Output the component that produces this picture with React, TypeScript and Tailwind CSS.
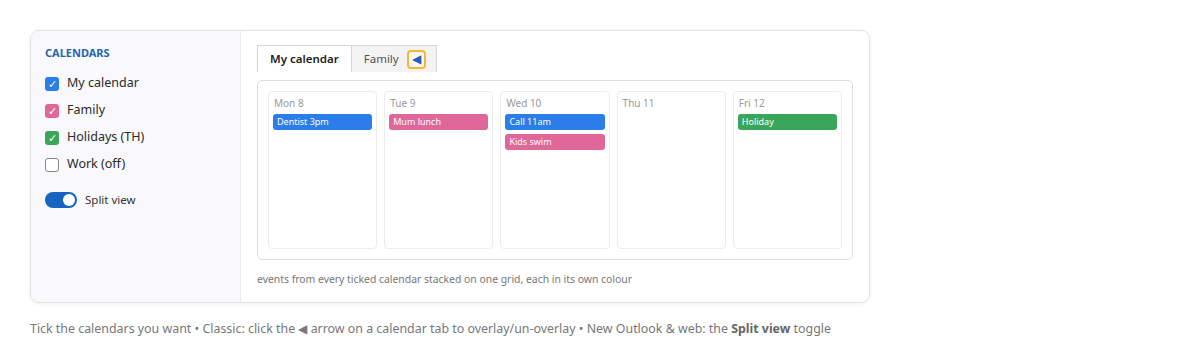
const calendars = [
  { name: "My calendar", color: "bg-[#2b7de9]", checked: true },
  { name: "Family", color: "bg-[#e0679a]", checked: true },
  { name: "Holidays (TH)", color: "bg-[#3aa65a]", checked: true },
  { name: "Work (off)", color: "", checked: false },
]

const days = [
  { label: "Mon 8", events: [{ title: "Dentist 3pm", color: "bg-[#2b7de9]" }] },
  { label: "Tue 9", events: [{ title: "Mum lunch", color: "bg-[#e0679a]" }] },
  {
    label: "Wed 10",
    events: [
      { title: "Call 11am", color: "bg-[#2b7de9]" },
      { title: "Kids swim", color: "bg-[#e0679a]" },
    ],
  },
  { label: "Thu 11", events: [] },
  { label: "Fri 12", events: [{ title: "Holiday", color: "bg-[#3aa65a]" }] },
]

export default function App() {
  return (
    <div className="min-h-screen bg-white px-[30px] pt-[30px] font-['Noto_Sans',sans-serif] text-[#333]">
      {/* Card */}
      <div className="flex w-[840px] h-[273px] rounded-[9px] border border-[#e3e3e3] bg-white shadow-[0_1px_4px_rgba(0,0,0,0.06)] overflow-hidden">
        {/* Sidebar */}
        <div className="w-[210px] shrink-0 bg-[#f9f9fb] border-r border-[#ececec] pl-[14px] pt-[14px]">
          <div className="text-[11px] font-bold text-[#1f64b8] leading-4 mb-[9px]">CALENDARS</div>
          <div className="flex flex-col">
            {calendars.map((c) => (
              <div key={c.name} className="flex items-center h-[27px] gap-[8px]">
                {c.checked ? (
                  <span className={`w-[14px] h-[14px] rounded-[3px] ${c.color} flex items-center justify-center text-white text-[11px] leading-none`}>
                    ✓
                  </span>
                ) : (
                  <span className="w-[14px] h-[14px] rounded-[3px] border border-[#888] bg-white" />
                )}
                <span className="text-[12.5px] text-[#2a2a2a]">{c.name}</span>
              </div>
            ))}
          </div>
          <div className="flex items-center gap-[8px] mt-[13px]">
            <div className="w-[32px] h-[16px] rounded-full bg-[#1565c0] flex items-center justify-end pr-[2px]">
              <div className="w-[12px] h-[12px] rounded-full bg-white" />
            </div>
            <span className="text-[11.5px] text-[#333]">Split view</span>
          </div>
        </div>

        {/* Main */}
        <div className="flex-1 pl-[16px] pr-[16px] pt-[14px]">
          <div className="flex mb-[8px]">
            <div className="h-[27px] px-[12px] flex items-center border border-[#d6d6d6] border-b-0 bg-white text-[11.5px] font-semibold text-[#222]">
              My calendar
            </div>
            <div className="h-[27px] pl-[12px] pr-[10px] flex items-center gap-[8px] border border-l-0 border-[#d6d6d6] border-b-0 bg-[#f3f3f3] text-[11.5px] text-[#555]">
              Family
              <span className="w-[19px] h-[19px] rounded-[4px] border-2 border-[#f5b73b] bg-[#fffaf0] flex items-center justify-center text-[12px] text-[#1e5fc0] leading-none">
                ◀
              </span>
            </div>
          </div>
          <div className="border border-[#dedede] rounded-[5px] p-[10px] h-[180px]">
            <div className="grid grid-cols-5 gap-[7px] h-full">
              {days.map((d) => (
                <div key={d.label} className="border border-[#ececec] rounded-[4px] px-[4px] pt-[4px]">
                  <div className="text-[10px] text-[#999] leading-[14px] pl-[1px] mb-[4px]">{d.label}</div>
                  <div className="flex flex-col gap-[4px]">
                    {d.events.map((e) => (
                      <div key={e.title} className={`${e.color} rounded-[3px] h-[16px] px-[4px] flex items-center text-[9px] text-white`}>
                        {e.title}
                      </div>
                    ))}
                  </div>
                </div>
              ))}
            </div>
          </div>
          <div className="mt-[12px] text-[10.4px] text-[#777]">
            events from every ticked calendar stacked on one grid, each in its own colour
          </div>
        </div>
      </div>

      {/* Footer */}
      <div className="mt-[17px] text-[12.4px] text-[#777]">
        Tick the calendars you want • Classic: click the ◀ arrow on a calendar tab to overlay/un-overlay • New Outlook &amp; web: the{" "}
        <span className="font-bold text-[#666]">Split view</span> toggle
      </div>
    </div>
  )
}
